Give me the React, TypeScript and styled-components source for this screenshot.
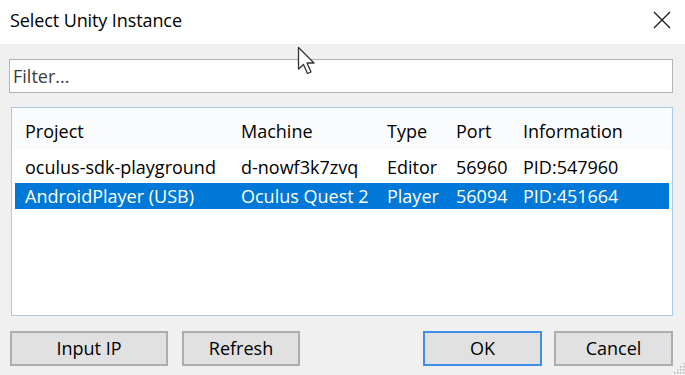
import React from "react";
import styled, { createGlobalStyle } from "styled-components";

const Global = createGlobalStyle`
  html, body { margin: 0; padding: 0; background: #f0f0f0; }
  * { box-sizing: border-box; }
`;

const FONT = `"Open Sans", "Noto Sans", sans-serif`;

const Window = styled.div`
  position: relative;
  width: 685px;
  height: 375px;
  background: #f0f0f0;
  font-family: ${FONT};
  font-size: 18px;
  color: #000;
  display: flex;
  flex-direction: column;
  overflow: hidden;
`;

const TitleBar = styled.div`
  height: 44px;
  background: #fff;
  display: flex;
  align-items: center;
  justify-content: space-between;
  padding: 0 14px 4px 10px;
`;

const Title = styled.div`
  font-size: 18px;
  letter-spacing: -0.1px;
`;

const Body = styled.div`
  flex: 1;
  display: flex;
  flex-direction: column;
  padding: 15px 12px 0 9px;
`;

const FilterInput = styled.div`
  height: 34px;
  background: #fff;
  border: 1px solid #b4b4b4;
  display: flex;
  align-items: center;
  padding-left: 3px;
  color: #3c3c3c;
`;

const List = styled.div`
  margin: 14px 0 0 2px;
  height: 209px;
  background: #fff;
  border: 1px solid #a9cbe9;
  padding: 0 3px;
`;

const GRID = "216px 146px 69px 67px 1fr";

const Header = styled.div`
  display: grid;
  grid-template-columns: ${GRID};
  height: 42px;
  align-items: center;
  padding: 4px 0 0 3px;
  background: #fafbfc;
  margin: 0 -3px;
`;

const Row = styled.div<{ $selected?: boolean; $height: number }>`
  display: grid;
  grid-template-columns: ${GRID};
  height: ${(p) => p.$height}px;
  align-items: center;
  background: ${(p) => (p.$selected ? "#0078d7" : "transparent")};
  color: ${(p) => (p.$selected ? "#fff" : "#000")};
`;

const Cell = styled.div`
  padding-left: 10px;
  white-space: nowrap;
`;

const ButtonRow = styled.div`
  display: flex;
  margin-top: 15px;
  padding-left: 1px;
`;

const Button = styled.div<{ $default?: boolean; $gap?: number; $width: number }>`
  height: 35px;
  width: ${(p) => p.$width}px;
  margin-left: ${(p) => p.$gap ?? 0}px;
  background: #e1e1e1;
  border: ${(p) => (p.$default ? "2px solid #3d8ee6" : "2px solid #adadad")};
  display: flex;
  align-items: center;
  justify-content: center;
  padding-bottom: 1px;
`;

const Spacer = styled.div`
  flex: 1;
`;

const Cursor = styled.svg`
  position: absolute;
  left: 297px;
  top: 46px;
`;

const Grip = styled.svg`
  position: absolute;
  right: 0;
  bottom: 0;
`;

const CloseIcon = () => (
  <svg width="18" height="18" viewBox="0 0 18 18">
    <path d="M1 1 L17 17 M17 1 L1 17" stroke="#222" strokeWidth="1.4" fill="none" />
  </svg>
);

const columns = ["Project", "Machine", "Type", "Port", "Information"];
const rows = [
  ["oculus-sdk-playground", "d-nowf3k7zvq", "Editor", "56960", "PID:547960"],
  ["AndroidPlayer (USB)", "Oculus Quest 2", "Player", "56094", "PID:451664"],
];

export default function App() {
  return (
    <>
      <Global />
      <Window>
        <TitleBar>
          <Title>Select Unity Instance</Title>
          <CloseIcon />
        </TitleBar>
        <Body>
          <FilterInput>Filter...</FilterInput>
          <List>
            <Header>
              {columns.map((c) => (
                <Cell key={c}>{c}</Cell>
              ))}
            </Header>
            {rows.map((r, i) => (
              <Row key={i} $selected={i === 1} $height={i === 0 ? 33 : 26}>
                {r.map((c, j) => (
                  <Cell key={j}>{c}</Cell>
                ))}
              </Row>
            ))}
          </List>
          <ButtonRow>
            <Button $width={158}>Input IP</Button>
            <Button $width={118} $gap={14}>Refresh</Button>
            <Spacer />
            <Button $width={119} $default>OK</Button>
            <Button $width={119} $gap={12}>Cancel</Button>
          </ButtonRow>
        </Body>
        <Cursor width="22" height="30" viewBox="0 0 22 30">
          <path
            d="M1.5 1.5 L1.5 23 L6.5 18.5 L10.5 27.5 L14 26 L10 17 L17 17 Z"
            fill="#fff"
            stroke="#333"
            strokeWidth="1.3"
            strokeLinejoin="round"
          />
        </Cursor>
        <Grip width="12" height="14" viewBox="0 0 12 14">
          {[
            [10, 2], [10, 5], [7, 5], [10, 8], [7, 8], [4, 8], [10, 11], [7, 11], [4, 11], [1, 11],
          ].map(([x, y], i) => (
            <rect key={i} x={x} y={y} width="1.5" height="1.5" fill="#b8b8b8" />
          ))}
        </Grip>
      </Window>
    </>
  );
}
